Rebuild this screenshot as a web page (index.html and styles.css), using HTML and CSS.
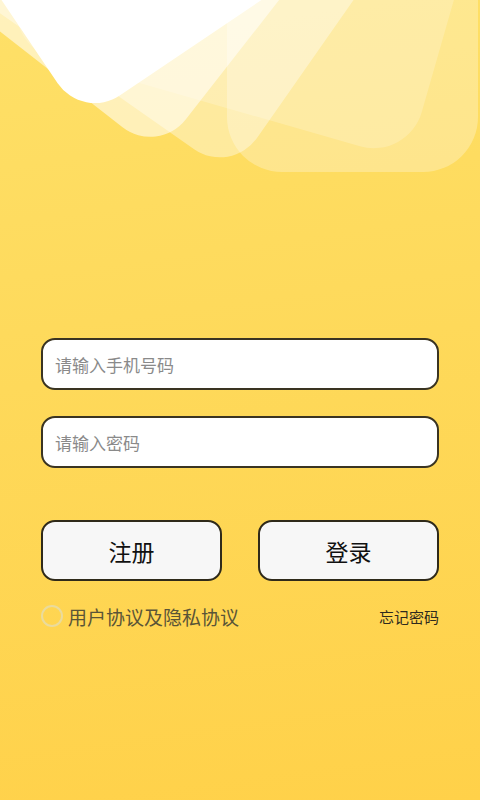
FILE: index.html
```html
<!DOCTYPE html>
<html lang="zh-CN">
<head>
<meta charset="utf-8">
<title>登录</title>
<link rel="stylesheet" href="styles.css">
</head>
<body>
<div class="screen">
  <svg class="hero" viewBox="0 0 480 200" width="480" height="200" aria-hidden="true">
    <g fill="#fff">
      <rect transform="translate(227,-60)" x="0" y="0" width="251" height="232" rx="55" opacity="0.28"/>
      <rect transform="translate(408,160) rotate(16)" x="-420" y="-330" width="420" height="330" rx="50" opacity="0.2"/>
      <rect transform="translate(231,175) rotate(-55)" x="0" y="-400" width="500" height="400" rx="45" opacity="0.38"/>
      <rect transform="translate(158,155) rotate(-52)" x="0" y="-400" width="500" height="400" rx="45" opacity="0.55"/>
      <rect transform="translate(82.8,120.5) rotate(-34)" x="0" y="-400" width="500" height="400" rx="45"/>
    </g>
  </svg>
  <form class="form">
    <label class="field"><input type="tel" placeholder="请输入手机号码"></label>
    <label class="field"><input type="password" placeholder="请输入密码"></label>
    <div class="actions">
      <button type="button" class="btn">注册</button>
      <button type="button" class="btn">登录</button>
    </div>
    <div class="meta">
      <label class="agree"><span class="radio"></span><span>用户协议及隐私协议</span></label>
      <a class="forgot">忘记密码</a>
    </div>
  </form>
</div>
</body>
</html>
```
FILE: styles.css
```css
* { box-sizing: border-box; }
html, body { margin: 0; padding: 0; }
body {
  font-family: "Noto Sans CJK SC", "Noto Sans", sans-serif;
}
.screen {
  width: 480px;
  height: 800px;
  overflow: hidden;
  background: linear-gradient(172deg, #fee068 0%, #fed95a 45%, #ffd149 100%);
}
.hero {
  display: block;
  width: 480px;
  height: 200px;
}
.form {
  display: flex;
  flex-direction: column;
  padding: 138px 41px 0;
  margin: 0;
}
.field {
  display: block;
  height: 52px;
  border: 2px solid #3a3422;
  border-radius: 14px;
  background: #fff;
  margin-bottom: 26px;
  padding: 0 12px;
}
.field input {
  width: 100%;
  height: 100%;
  border: 0;
  outline: 0;
  background: transparent;
  font-family: inherit;
  font-size: 17px;
  color: #333;
  padding: 0;
}
.field input::placeholder { color: #8a8a8a; }
.actions {
  display: flex;
  justify-content: space-between;
  margin-top: 26px;
}
.btn {
  width: 181px;
  height: 61px;
  border: 2px solid #2f2a1a;
  border-radius: 14px;
  background: #f7f7f7;
  font-family: inherit;
  font-size: 23px;
  color: #111;
  padding: 0;
}
.meta {
  display: flex;
  align-items: center;
  justify-content: space-between;
  margin-top: 22px;
  height: 26px;
}
.agree {
  display: flex;
  align-items: center;
  gap: 5px;
  font-size: 19px;
  color: #5a5437;
}
.radio {
  width: 22px;
  height: 22px;
  border-radius: 50%;
  border: 2px solid #eadb9c;
}
.forgot {
  font-size: 15px;
  color: #2e2a1e;
}
```
